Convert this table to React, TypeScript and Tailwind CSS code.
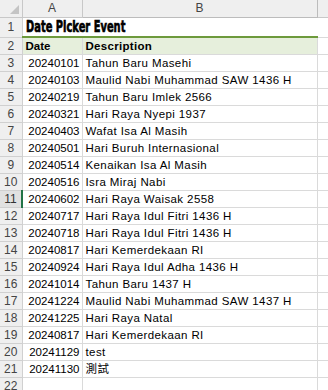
const rows: [string, string][] = [
  ["20240101", "Tahun Baru Masehi"],
  ["20240103", "Maulid Nabi Muhammad SAW 1436 H"],
  ["20240219", "Tahun Baru Imlek 2566"],
  ["20240321", "Hari Raya Nyepi 1937"],
  ["20240403", "Wafat Isa Al Masih"],
  ["20240501", "Hari Buruh Internasional"],
  ["20240514", "Kenaikan Isa Al Masih"],
  ["20240516", "Isra Miraj Nabi"],
  ["20240602", "Hari Raya Waisak 2558"],
  ["20240717", "Hari Raya Idul Fitri 1436 H"],
  ["20240718", "Hari Raya Idul Fitri 1436 H"],
  ["20240817", "Hari Kemerdekaan RI"],
  ["20240924", "Hari Raya Idul Adha 1436 H"],
  ["20241014", "Tahun Baru 1437 H"],
  ["20241224", "Maulid Nabi Muhammad SAW 1437 H"],
  ["20241225", "Hari Raya Natal"],
  ["20240817", "Hari Kemerdekaan RI"],
  ["20241129", "test"],
  ["20241130", "測試"],
];

const cell = "border-r border-b border-[#dadada] px-[3px] py-0 whitespace-nowrap overflow-hidden";
const rowHead =
  "w-[22px] border-r border-b border-[#d0d0d0] bg-[#efefef] p-0 text-center text-[12px] text-[#444]";

export default function App() {
  return (
    <div className="h-[390px] w-[328px] overflow-hidden bg-white font-['Liberation_Sans','Noto_Sans_CJK_TC',sans-serif] text-[11.5px] leading-[16px] text-black">
      <table className="w-[357px] table-fixed border-collapse">
        <colgroup>
          <col className="w-[22px]" />
          <col className="w-[60px]" />
          <col className="w-[235px]" />
          <col className="w-[40px]" />
        </colgroup>
        <thead>
          <tr className="h-[17px] bg-[#efefef] text-[12px] text-[#444]">
            <th className="relative border-r border-b border-[#c8c8c8] p-0">
              <svg className="absolute bottom-[3px] right-[3px]" width="9" height="9" viewBox="0 0 9 9">
                <path d="M9 0 L9 9 L0 9 Z" fill="#c4c4c4" />
              </svg>
            </th>
            <th className="border-r border-b border-[#c8c8c8] p-0 font-normal">A</th>
            <th className="border-r border-b border-[#bcbcbc] p-0 font-normal">B</th>
            <th className="border-b border-[#c8c8c8] p-0 font-normal"></th>
          </tr>
        </thead>
        <tbody>
          <tr className="h-[20px]">
            <td className={rowHead}>1</td>
            <td colSpan={2} className="overflow-hidden border-b-2 border-[#6d9a3c] px-[3px] py-0 whitespace-nowrap">
              <span className="inline-block origin-left scale-x-[0.6] font-['DejaVu_Sans','Liberation_Sans',sans-serif] text-[16.5px] leading-[18px] font-bold [-webkit-text-stroke:0.7px_black]">
                Date Picker Event
              </span>
            </td>
            <td className="border-b border-[#dadada]"></td>
          </tr>
          <tr className="h-[17px]">
            <td className={rowHead}>2</td>
            <td className={`${cell} bg-[#e6efdc] font-bold`}>Date</td>
            <td className={`${cell} bg-[#e6efdc] font-bold tracking-[0.3px]`}>Description</td>
            <td className="border-b border-[#dadada]"></td>
          </tr>
          {rows.map(([d, t], i) => {
            const n = i + 3;
            const sel = n === 11;
            return (
              <tr key={n} className="h-[17px]">
                <td
                  className={
                    sel
                      ? "w-[22px] border-b border-r-2 border-b-[#d0d0d0] border-r-[#217346] bg-[#e1e1e1] p-0 text-center text-[12px] text-[#333]"
                      : rowHead
                  }
                >
                  {n}
                </td>
                <td className={`${cell} pr-[2px] text-right`}>{d}</td>
                <td className={`${cell} tracking-[0.4px]`}>{t}</td>
                <td className="border-b border-[#dadada]"></td>
              </tr>
            );
          })}
          <tr className="h-[17px]">
            <td className={rowHead}>22</td>
            <td className={cell}></td>
            <td className={cell}></td>
            <td className="border-b border-[#dadada]"></td>
          </tr>
        </tbody>
      </table>
    </div>
  );
}
